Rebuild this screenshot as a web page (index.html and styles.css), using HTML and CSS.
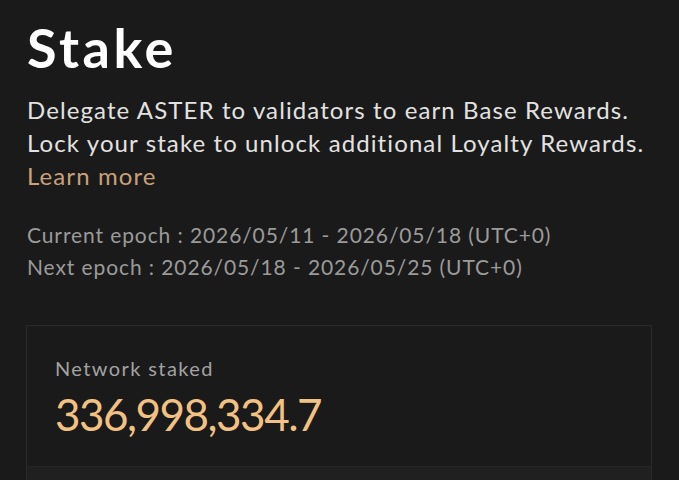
FILE: index.html
```html
<!DOCTYPE html>
<html lang="en">

<head>
    <meta charset="UTF-8">
    <meta name="viewport" content="width=device-width, initial-scale=1.0">
    <title>Stake</title>
    <link rel="stylesheet" href="styles.css">
</head>

<body>
    <div class="page">
        <h1 class="title">Stake</h1>
        <p class="intro">
            Delegate ASTER to validators to earn Base Rewards.<br>
            Lock your stake to unlock additional Loyalty Rewards.<br>
            <a href="#" class="learn">Learn more</a>
        </p>

        <div class="epochs">
            <p>Current epoch : 2026/05/11 - 2026/05/18 (UTC+0)</p>
            <p>Next epoch : 2026/05/18 - 2026/05/25 (UTC+0)</p>
        </div>

        <div class="card">
            <div class="card-top">
                <div class="label">Network staked</div>
                <div class="amount">336,998,334.7</div>
            </div>
            <div class="card-bottom"></div>
        </div>
    </div>
</body>

</html>
```

FILE: styles.css
```css
body {
    margin: 0;
    background-color: #1a1a1a;
    font-family: Lato, "Open Sans", sans-serif;
    color: #e2e2e2;
}

.page {
    padding: 18px 27px 0 27px;
}

.title {
    margin: 0;
    font-size: 54px;
    font-weight: 700;
    letter-spacing: 3.5px;
    color: #fff;
    line-height: 60px;
}

.intro {
    margin: 15px 0 0 0;
    font-size: 24px;
    line-height: 33px;
    letter-spacing: 1.1px;
    white-space: nowrap;
}

.learn {
    color: #c9a07a;
    text-decoration: none;
}

.epochs {
    margin-top: 27px;
}

.epochs p {
    margin: 0;
    font-size: 21px;
    line-height: 32px;
    letter-spacing: 0.9px;
    color: #9b9b9b;
}

.card {
    margin: 42px 0 0 -1px;
    width: 624px;
    border: 1px solid #2a2a2a;
}

.card-top {
    padding: 28px 28px 26px 28px;
}

.label {
    font-size: 20px;
    color: #a2a2a2;
    line-height: 28px;
    letter-spacing: 1.4px;
}

.amount {
    margin-top: 6px;
    font-size: 44px;
    line-height: 52px;
    letter-spacing: -1.5px;
    color: #f2c184;
}

.card-bottom {
    height: 60px;
    background-color: #202020;
    border-top: 1px solid #262626;
}
```
